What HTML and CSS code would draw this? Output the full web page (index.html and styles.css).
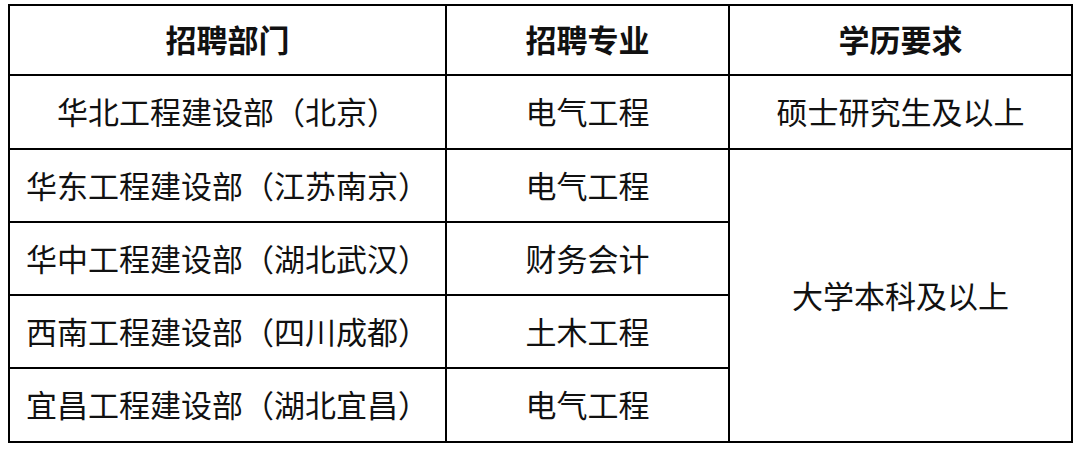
FILE: index.html
```html
<!DOCTYPE html>
<html lang="zh-CN">
<head>
<meta charset="utf-8">
<link rel="stylesheet" href="styles.css">
</head>
<body>
<table class="jobs">
  <colgroup>
    <col class="c1"><col class="c2"><col class="c3">
  </colgroup>
  <thead>
    <tr class="head"><th>招聘部门</th><th>招聘专业</th><th>学历要求</th></tr>
  </thead>
  <tbody>
    <tr class="tall"><td>华北工程建设部（北京）</td><td>电气工程</td><td>硕士研究生及以上</td></tr>
    <tr><td>华东工程建设部（江苏南京）</td><td>电气工程</td><td rowspan="4">大学本科及以上</td></tr>
    <tr><td>华中工程建设部（湖北武汉）</td><td>财务会计</td></tr>
    <tr><td>西南工程建设部（四川成都）</td><td>土木工程</td></tr>
    <tr><td>宜昌工程建设部（湖北宜昌）</td><td>电气工程</td></tr>
  </tbody>
</table>
</body>
</html>
```
FILE: styles.css
```css
html, body {
  margin: 0;
  padding: 0;
  background: #fff;
}
body {
  padding: 4px 0 0 8px;
  font-family: "Noto Sans CJK SC", "Noto Sans", sans-serif;
  color: #111;
}
.jobs {
  border-collapse: collapse;
  table-layout: fixed;
  width: 1063px;
}
.c1 { width: 437px; }
.c2 { width: 283px; }
.c3 { width: 343px; }
.jobs th, .jobs td {
  border: 2px solid #000;
  padding: 0 0 3px 0;
  text-align: center;
  vertical-align: middle;
  font-size: 31px;
  line-height: 1;
}
.jobs th {
  font-weight: 700;
  height: 65px;
}
.jobs td {
  font-weight: 400;
  height: 68px;
}
.jobs .tall td,
.jobs tbody tr:last-child td {
  height: 69px;
}
```
